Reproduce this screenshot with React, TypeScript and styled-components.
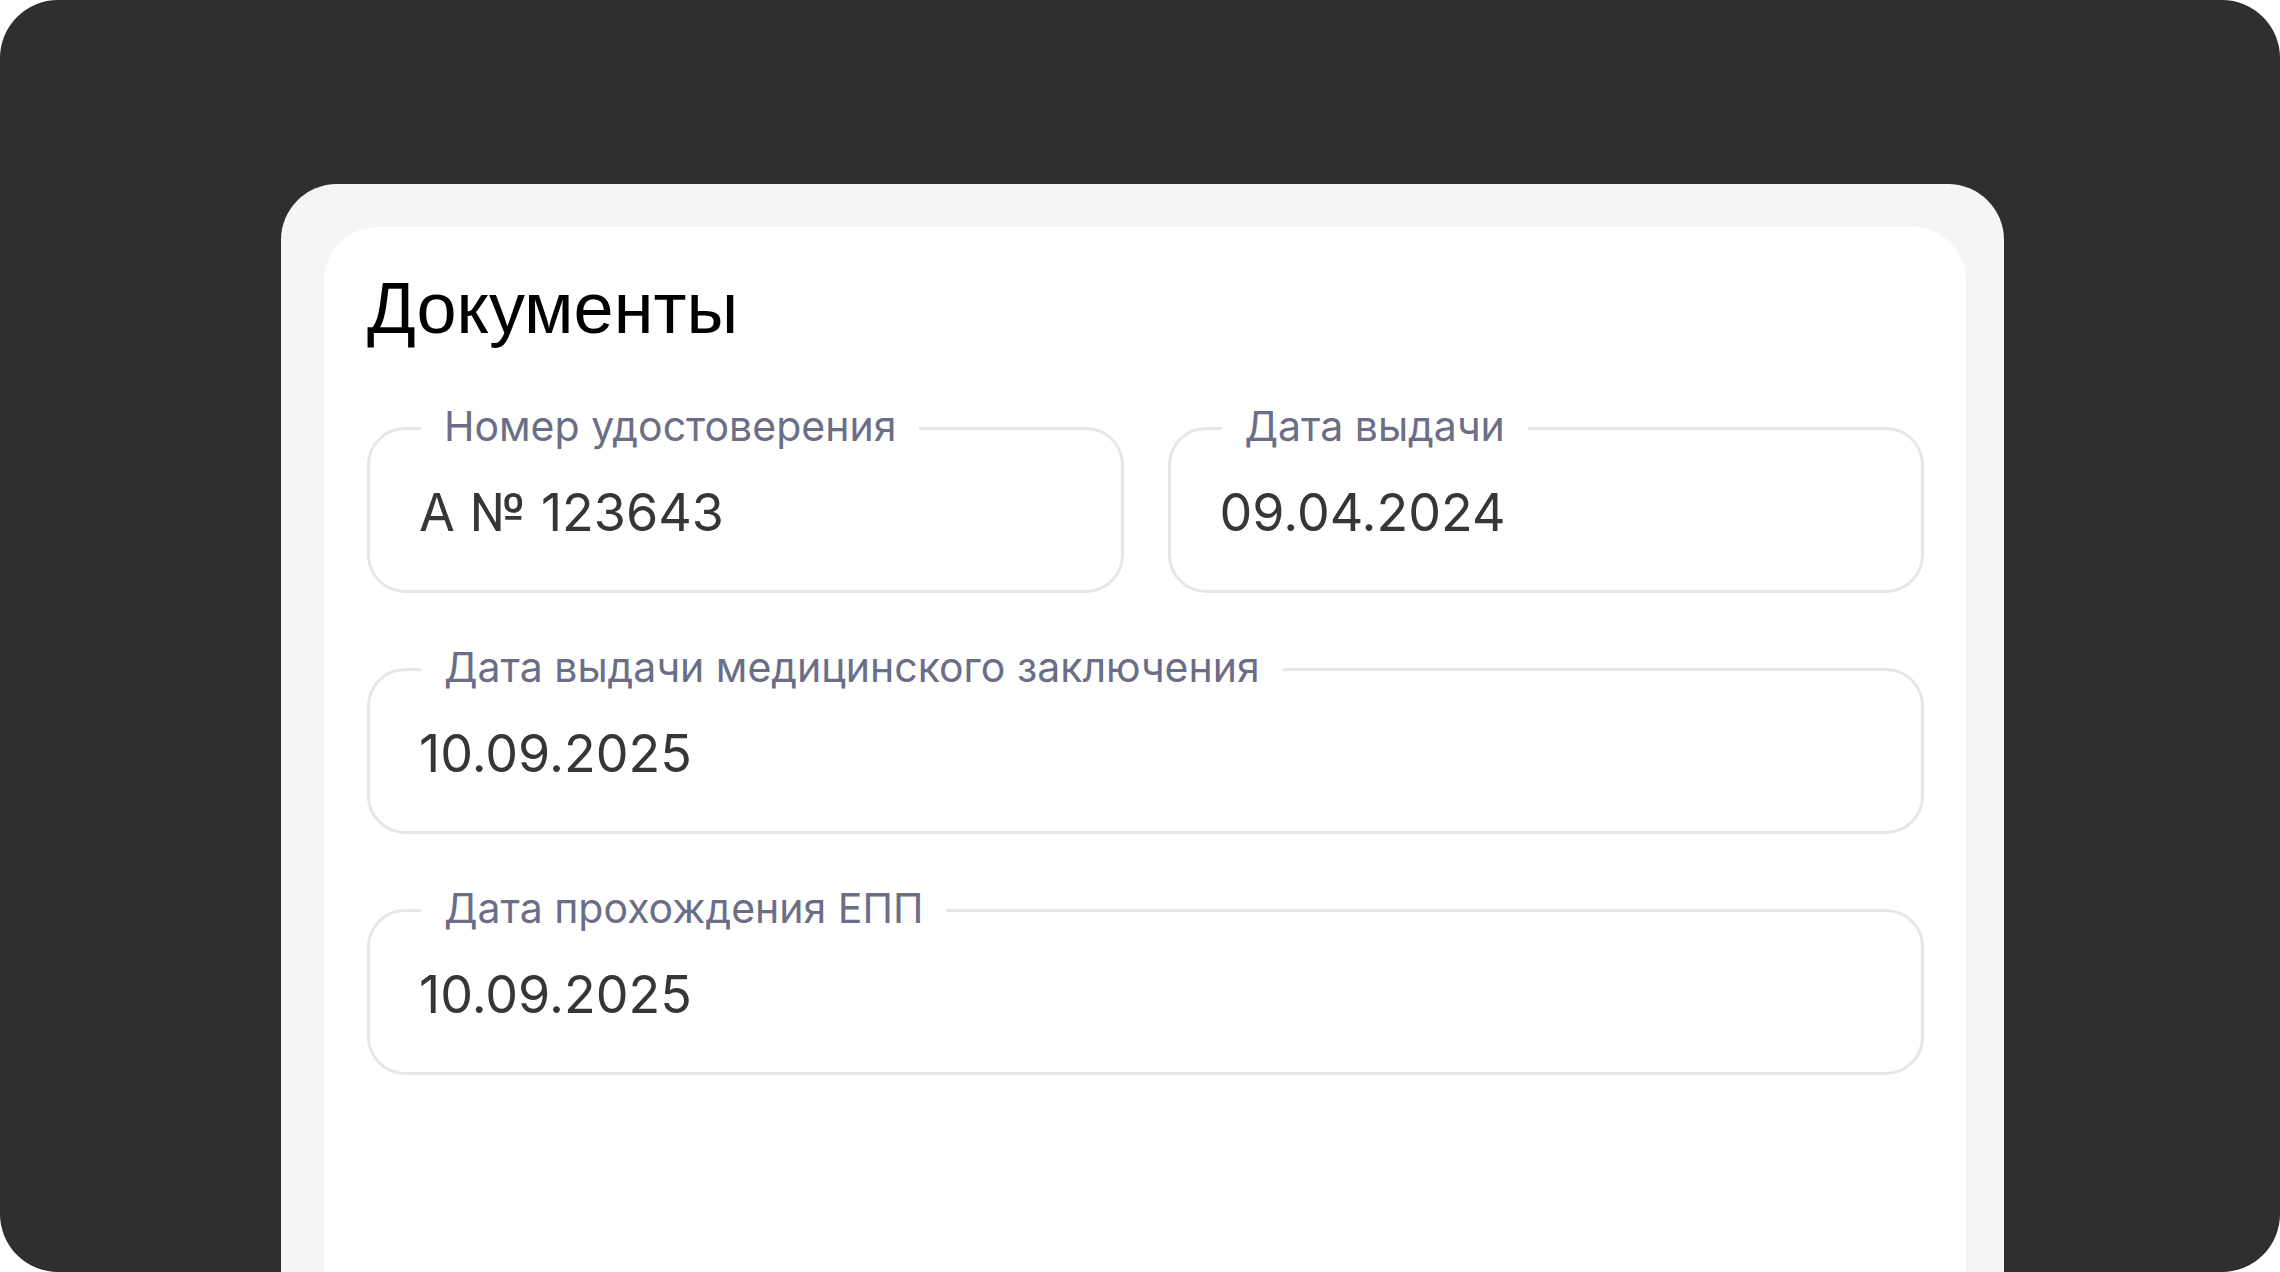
import React from 'react'
import styled, { createGlobalStyle } from 'styled-components'

const GlobalStyle = createGlobalStyle`
  html, body {
    margin: 0;
    padding: 0;
    background: #ffffff;
  }
  * {
    box-sizing: border-box;
  }
`

export const Frame = styled.div`
  width: 2280px;
  height: 1272px;
  overflow: hidden;
  background: #2f2f2f;
  border-radius: 58px;
  padding: 184px 0 0 281px;
`

export const Card = styled.div`
  width: 1723px;
  height: 1200px;
  background: #f5f5f5;
  border-radius: 56px;
  padding: 43px 38px 0 43px;
`

export const Panel = styled.section`
  height: 100%;
  background: #ffffff;
  border-radius: 54px;
  padding: 47px 42px 0 43px;
  display: flex;
  flex-direction: column;
`

export const Title = styled.h2`
  margin: 0 0 85px 0;
  font-family: 'Liberation Sans', Arial, sans-serif;
  font-weight: 400;
  font-size: 72px;
  line-height: 68px;
  color: #000000;
`

export const Grid = styled.div`
  display: grid;
  grid-template-columns: 1fr 1fr;
  column-gap: 44px;
  row-gap: 75px;
`

export const Field = styled.div<{ wide?: boolean }>`
  position: relative;
  grid-column: ${props => (props.wide ? '1 / -1' : 'auto')};
  height: 166px;
  border: 3px solid #e6e6e6;
  border-radius: 38px;
  display: flex;
  align-items: center;
  padding: 5px 0 0 49px;
`

export const Label = styled.span`
  position: absolute;
  top: -24px;
  left: 51px;
  padding: 0 23px;
  background: #ffffff;
  font-family: Inter, 'Noto Sans', sans-serif;
  font-size: 41px;
  line-height: 41px;
  color: #6b6e87;
  white-space: nowrap;
`

export const Value = styled.span`
  font-family: Inter, 'Noto Sans', sans-serif;
  font-size: 52px;
  line-height: 52px;
  color: #363636;
`

const fields = [
  { label: 'Номер удостоверения', value: 'А № 123643' },
  { label: 'Дата выдачи', value: '09.04.2024' },
  { label: 'Дата выдачи медицинского заключения', value: '10.09.2025', wide: true },
  { label: 'Дата прохождения ЕПП', value: '10.09.2025', wide: true },
]

export default function App() {
  return (
    <>
      <GlobalStyle />
      <Frame>
        <Card>
          <Panel>
            <Title>Документы</Title>
            <Grid>
              {fields.map(f => (
                <Field key={f.label} wide={f.wide}>
                  <Label>{f.label}</Label>
                  <Value>{f.value}</Value>
                </Field>
              ))}
            </Grid>
          </Panel>
        </Card>
      </Frame>
    </>
  )
}
